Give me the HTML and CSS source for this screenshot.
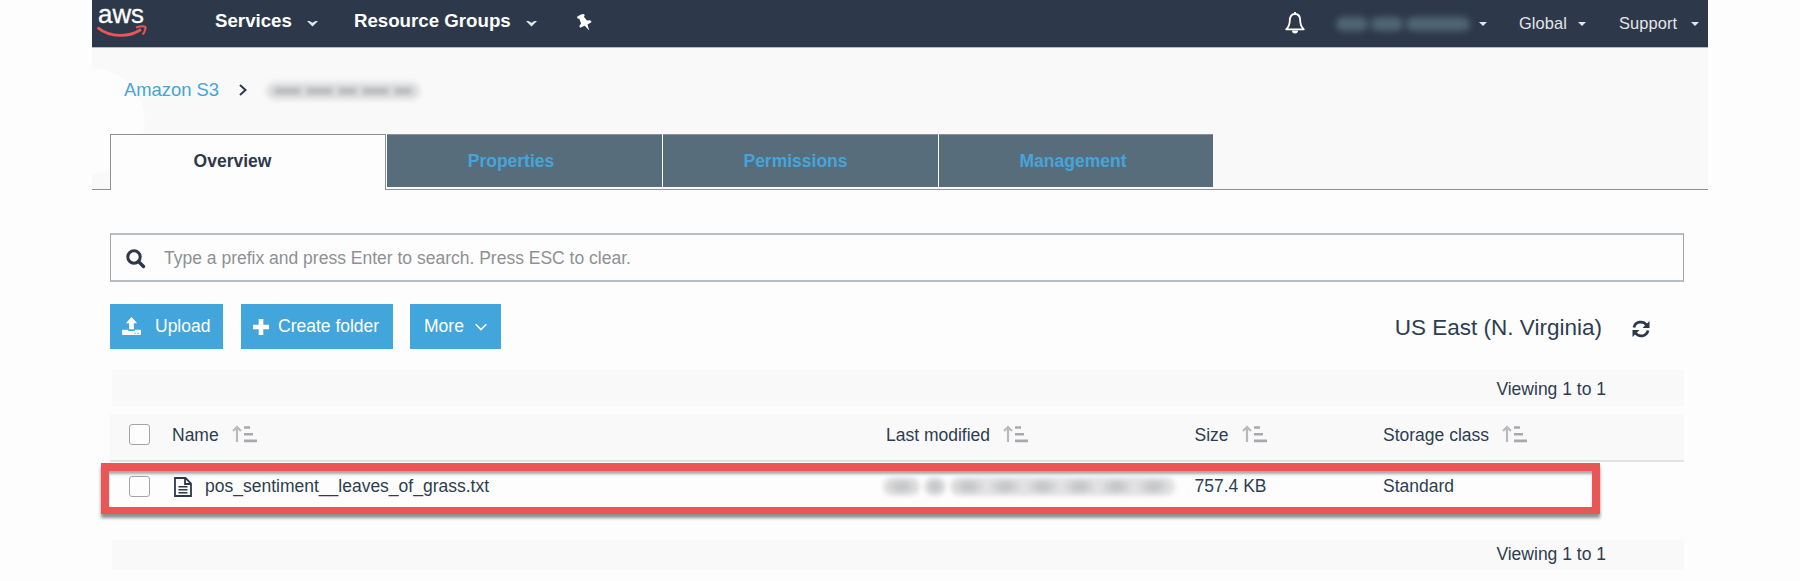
FILE: index.html
```
<!DOCTYPE html>
<html lang="en">
<head>
<meta charset="utf-8">
<title>Amazon S3</title>
<link rel="stylesheet" href="styles.css">
</head>
<body>
<svg class="defs" width="0" height="0" aria-hidden="true">
  <symbol id="caret" viewBox="0 0 10 5"><path d="M0 0h10L5 5z"/></symbol>
  <symbol id="chevron" viewBox="0 0 11 6"><path d="M0 0h2.500l3 1.800L8.500 0H11L5.500 5.500z"/></symbol>
  <symbol id="sort" viewBox="0 0 25 18"><path d="M5 17V2M1 6l4-4 4 4" fill="none" stroke="#b9babd" stroke-width="2.2"/><path d="M12 1.2h6v2.6h-6zM12 8h9v2.6h-9zM12 14.4h13v2.8H12z"/></symbol>
</svg>
<div class="console">
  <header class="nav">
    <svg class="logo" width="50" height="40" viewBox="0 0 50 40">
      <text class="logo-text" x="1" y="23" textLength="46" lengthAdjust="spacingAndGlyphs">aws</text>
      <path d="M.5 27.500C14 38 32 37.500 44 29.500" fill="none" stroke="#ea5555" stroke-width="2.800"/>
      <path d="M39 27.500C44 26 49.500 25.500 48.500 28.500Q47.500 33 45.500 34.500" fill="none" stroke="#ea5555" stroke-width="2"/>
    </svg>
    <span class="menu services">Services <svg class="caret" width="11" height="6"><use href="#chevron"/></svg></span>
    <span class="menu groups">Resource Groups <svg class="caret" width="11" height="6"><use href="#chevron"/></svg></span>
    <svg class="pin" width="15" height="17" viewBox="0 0 15 17"><path d="M4 .5 7 0l.7 1.3-.8 1.500 3 3.700 3.200-.3 1.600 1.700-4.200 2.600 1.800 6-4.600-4.700-4.600 2-.8-1.800 1.800-2.500L2.400 5 .6 4.600 0 2.700z" fill="#fff"/></svg>
    <svg class="bell" width="20" height="22" viewBox="0 0 20 22"><path d="M10 2C6 2 4.800 5 4.800 8.500c0 5-1.300 6.500-3.600 8.800h17.600c-2.300-2.300-3.600-3.800-3.600-8.800C15.200 5 14 2 10 2z" fill="none" stroke="#fff" stroke-width="1.800" stroke-linejoin="round"/><path d="M9 0h2v2H9zM7 18.500h6a3 3 0 0 1-6 0z" fill="#fff"/></svg>
    <span class="account"><i></i><i></i><i></i></span>
    <svg class="caret account-caret" width="8" height="4"><use href="#caret"/></svg>
    <span class="link global">Global</span><svg class="caret" width="8" height="4"><use href="#caret"/></svg>
    <span class="link support">Support</span><svg class="caret" width="8" height="4"><use href="#caret"/></svg>
  </header>

  <section class="head">
    <div class="crumbs">
      <a>Amazon S3</a>
      <svg width="8" height="12" viewBox="0 0 8 12"><path d="M1 1l5.500 5L1 11" fill="none" stroke="#2d394a" stroke-width="2"/></svg>
      <span class="bucket"><i></i><i></i><i></i><i></i><i></i></span>
    </div>
    <nav class="tabs">
      <span class="tab active">Overview</span>
      <span class="tab properties">Properties</span>
      <span class="tab permissions">Permissions</span>
      <span class="tab management">Management</span>
    </nav>
  </section>

  <main>
    <div class="search">
      <svg width="20" height="20" viewBox="0 0 20 20"><circle cx="8" cy="8" r="6.200" fill="none" stroke="#2d394a" stroke-width="3"/><path d="M12.500 12.500l5 5" stroke="#2d394a" stroke-width="3.400" stroke-linecap="round"/></svg>
      <span>Type a prefix and press Enter to search. Press ESC to clear.</span>
    </div>
    <div class="toolbar">
      <span class="btn upload"><svg width="19" height="19" viewBox="0 0 20 20"><path d="M10 0l6 6.500h-3.500V13h-5V6.500H4z"/><path d="M1 13.500h5.500v1.200h7v-1.200H19q1 0 1 1V18q0 1-1 1H1q-1 0-1-1v-3.500q0-1 1-1z"/><path d="M13 16.500h1.500v1H13zM16 16.500h1.500v1H16z" fill="#42a5db"/></svg>Upload</span>
      <span class="btn create"><svg width="16" height="16" viewBox="0 0 16 16"><path d="M5.700 0h4.600v5.700H16v4.600h-5.700V16H5.700v-5.700H0V5.700h5.700z"/></svg>Create folder</span>
      <span class="btn more">More<svg width="12" height="8" viewBox="0 0 12 8"><path d="M.7 1.200 6 6.500l5.300-5.300" fill="none" stroke="#fff" stroke-width="1.600"/></svg></span>
      <span class="region">US East (N. Virginia)</span>
      <svg class="refresh" width="18" height="18" viewBox="0 0 18 18"><path d="M2 7.500C3.300 1.500 11 .3 14.500 5M16 10.500C14.700 16.500 7 17.700 3.500 13" fill="none" stroke="#2d394a" stroke-width="2.800"/><path d="M17.500 1v7h-7zM.5 17v-7h7z" fill="#2d394a"/></svg>
    </div>
    <div class="count top">Viewing 1 to 1</div>
    <div class="row header">
      <span class="check"></span>
      <span>Name<svg class="sort" width="25" height="18"><use href="#sort"/></svg></span>
      <span>Last modified<svg class="sort" width="25" height="18"><use href="#sort"/></svg></span>
      <span>Size<svg class="sort" width="25" height="18"><use href="#sort"/></svg></span>
      <span>Storage class<svg class="sort" width="25" height="18"><use href="#sort"/></svg></span>
    </div>
    <div class="row item">
      <span class="check"></span>
      <span class="file"><svg width="18" height="20" viewBox="0 0 18 20"><path d="M1 1h10.500L17 6.500V19H1zM11 1v6h6" fill="none" stroke="#2d394a" stroke-width="1.800"/><path d="M4.500 9.700h9M4.500 12.700h9M4.500 15.700h9" stroke="#2d394a" stroke-width="1.500"/></svg>pos_sentiment__leaves_of_grass.txt</span>
      <span class="date"><i></i><i></i><i></i></span>
      <span>757.4 KB</span>
      <span>Standard</span>
      <div class="highlight"></div>
    </div>
    <div class="count bottom">Viewing 1 to 1</div>
  </main>
</div>
</body>
</html>
```
FILE: styles.css
```
* { box-sizing: border-box; }
body {
  margin: 0;
  height: 581px;
  overflow: hidden;
  background: #fdfdfd;
  color: #2d3e50;
  font-family: "Liberation Sans", Arial, sans-serif;
  font-size: 17.5px;
}
svg { display: block; flex: none; }
.defs { position: absolute; }
.console { width: 1616px; margin-left: 92px; }

.nav {
  display: flex;
  align-items: center;
  height: 47px;
  padding: 0 9px 5px 5px;
  background: #2d394a;
  color: #fff;
}
.logo { align-self: flex-start; }
.logo-text { font: 25px "Liberation Sans", sans-serif; fill: #fff; stroke: #fff; stroke-width: .3px; }
.menu { display: flex; align-items: center; font-size: 18.7px; font-weight: bold; white-space: nowrap; }
.menu .caret { margin: 6px 0 0 15px; }
.services { margin-left: 68px; }
.groups { margin-left: 36px; }
.caret { fill: #e4e5e8; }
.pin { margin: 2px 0 0 40px; }
.bell { margin: 4px 0 0 auto; }
.account { display: flex; gap: 3px; width: 142px; margin: 6px 0 0 27px; padding: 0 4px; filter: blur(3px); }
.account i { height: 14px; width: 32px; border-radius: 7px; background: #506473; }
.account i:last-child { width: 64px; }
.account-caret { margin-left: 5px; }
.nav > .caret { margin-top: 5px; }
.link { color: #e4e5e8; font-size: 16.4px; letter-spacing: .1px; margin-top: 5px; }
.global { width: 59px; margin-left: 32px; }
.support { width: 72px; margin-left: 33px; }

.head {
  height: 143px;
  padding-top: 29px;
  border-top: 1px solid #b9babd;
  background: radial-gradient(circle at 0 73px, #fdfdfd 52px, #f9f9f9 53px);
}
.crumbs { display: flex; align-items: center; height: 25px; padding-left: 32px; font-size: 18.4px; }
.crumbs a { width: 115px; color: #45a5da; }
.bucket {
  display: flex;
  gap: 5px;
  width: 154px;
  margin: 2px 0 0 19px;
  padding: 6px 8px;
  border-radius: 9px;
  background: #dfdfe0;
  filter: blur(2.500px);
}
.bucket i { flex: 3; height: 6px; border-radius: 3px; background: #b4b6b9; }
.bucket i:nth-child(3), .bucket i:last-child { flex: 2; }
.tabs {
  display: flex;
  align-items: flex-start;
  gap: 1px;
  height: 56px;
  margin-top: 32px;
  padding-left: 18px;
  background: linear-gradient(#8e9194, #8e9194) 0 100% / 100% 1px no-repeat;
}
.tab {
  width: 275px;
  height: 53px;
  padding-top: 16px;
  text-align: center;
  line-height: 20px;
  font-weight: bold;
  color: #45a5da;
  background: #586d7b;
  border-top: 1px solid #8e9194;
}
.properties { padding-right: 27px; }
.permissions { padding-right: 10px; }
.management { width: 274px; padding-right: 6px; }
.tab.active {
  width: 276px;
  height: 56px;
  padding-right: 31px;
  color: #2d394a;
  background: #fdfdfd;
  border: 1px solid #8e9194;
  border-bottom: 0;
}

main { padding: 43px 24px 0 18px; }
.search {
  display: flex;
  align-items: center;
  height: 49px;
  padding: 0 0 0 15px;
  border: 1px solid #a0a5aa;
  border-width: 2px 1px;
  border-top-color: #b9bec3;
  border-bottom-color: #b9bec3;
  color: #8e9194;
}
.search svg { margin-top: 2px; }
.search span { margin: 1px 0 0 18px; }
.toolbar { display: flex; align-items: center; height: 45px; margin-top: 22px; }
.btn { display: flex; align-items: center; height: 45px; color: #fff; background: #42a5db; white-space: nowrap; }
.btn svg { fill: #fff; }
.upload { width: 113px; padding-left: 12px; gap: 14px; }
.create { width: 152px; margin-left: 18px; padding-left: 12px; gap: 9px; }
.more { width: 91px; margin-left: 17px; padding-left: 14px; gap: 11px; }
.region { margin: 2px 0 0 auto; font-size: 22.500px; white-space: nowrap; }
.refresh { margin: 4px 34px 0 30px; }
.count { display: flex; align-items: center; justify-content: flex-end; margin-left: 2px; padding-right: 78px; background: #f9f9f9; }
.top { height: 36px; margin-top: 21px; padding-top: 3px; }
.bottom { height: 30px; margin-top: 27px; padding-bottom: 2px; }

.row { display: grid; grid-template-columns: 62px 714px 308.500px 188.500px 1fr; align-items: center; }
.row > span { display: flex; align-items: center; white-space: nowrap; }
.row > .check { width: 21px; height: 21px; margin-left: 18.500px; border: 1px solid #a2a5a8; border-radius: 3px; background: #fdfdfd; }
.sort { margin: -2px 0 0 13px; fill: #a8a9ac; }
.header { height: 48px; margin-top: 8px; padding-bottom: 4px; background: #f9f9f9; border-bottom: 2px solid #e2e2e4; }
.header > .check { margin-top: -1px; }
.item { position: relative; height: 51px; padding-bottom: 2px; }
.item > .check { margin-top: -1px; }
.file svg { margin: 0 13px 0 2px; }
.date { width: 292px; height: 19px; gap: 4px; margin-left: -3px; filter: blur(2px); }
.date i { height: 19px; border-radius: 9px; background: radial-gradient(ellipse, #c4c5c8 15%, #e2e2e3 65%); }
.date i:first-child { width: 37px; }
.date i:nth-child(2) { width: 22px; }
.date i:last-child {
  flex: 1;
  background: radial-gradient(ellipse, #c4c5c8 15%, #e2e2e3 65%) 0 0 / 37px 100%;
}
.highlight {
  position: absolute;
  left: -9px;
  top: 1px;
  width: 1499px;
  height: 51px;
  border: 8px solid #ea5555;
  border-bottom-width: 7px;
  box-shadow: 0 4px 3px #8e9194, inset 0 4px 3px -1px #a5a7aa;
}
```
